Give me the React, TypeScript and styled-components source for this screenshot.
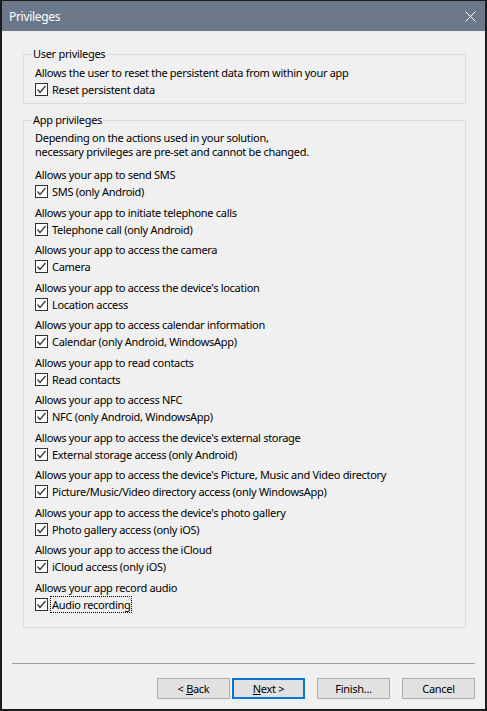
import React from "react";
import styled, { createGlobalStyle } from "styled-components";

const GlobalStyle = createGlobalStyle`
  html, body {
    margin: 0;
    padding: 0;
    background: #f0f0f0;
  }
  * {
    box-sizing: border-box;
  }
`;

const FONT = `"Noto Sans", "Open Sans", "Liberation Sans", sans-serif`;

const Window = styled.div`
  width: 487px;
  height: 711px;
  display: flex;
  flex-direction: column;
  background: #f0f0f0;
  border: 2px solid #1c1c1c;
  border-top-width: 1px;
  font-family: ${FONT};
  font-size: 11px;
  letter-spacing: -0.3px;
  color: #000;
  overflow: hidden;
`;

const TitleBar = styled.div`
  height: 30px;
  flex: none;
  display: flex;
  align-items: center;
  justify-content: space-between;
  background: #6b788a;
  color: #fff;
  padding: 0 9px 0 7px;
  font-size: 12px;
`;

const CloseButton = styled.span`
  display: flex;
  width: 11px;
  height: 11px;
`;

const Body = styled.div`
  flex: 1;
  display: flex;
  flex-direction: column;
  padding: 16px 19px 0 21px;
`;

const Group = styled.fieldset<{ $bottom: number }>`
  margin: 0 0 9px 0;
  border: 1px solid #dcdcdc;
  padding: 4px 10px ${(p) => p.$bottom}px 11px;
  min-width: 0;
`;

const Legend = styled.legend`
  padding: 0 1px;
  margin-left: -3px;
  line-height: 14px;
  font-size: 11px;
`;

const Text = styled.div`
  line-height: 16px;
  white-space: nowrap;
`;

const Intro = styled.div`
  line-height: 14px;
  margin: 0 0 8px;
`;

const ItemList = styled.div`
  display: flex;
  flex-direction: column;
  gap: 4.5px;
`;

const CheckRow = styled.label`
  display: flex;
  align-items: center;
  height: 17px;
  gap: 2px;
`;

const BoxIcon = styled.svg`
  flex: none;
  width: 13px;
  height: 13px;
`;

const Caption = styled.span<{ $focused?: boolean }>`
  padding: 0 1px;
  line-height: 15px;
  border: 1px dotted ${(p) => (p.$focused ? "#000" : "transparent")};
`;

const Footer = styled.div`
  flex: none;
  padding: 0 10px 10px 10px;
`;

const Separator = styled.div`
  height: 1px;
  background: #a0a0a0;
  margin-bottom: 14px;
`;

const Buttons = styled.div`
  display: flex;
  justify-content: flex-end;
`;

const Button = styled.button<{ $primary?: boolean; $gap: number }>`
  width: 73px;
  height: 21px;
  margin-left: ${(p) => p.$gap}px;
  background: #e1e1e1;
  border: ${(p) => (p.$primary ? "2px solid #0078d7" : "1px solid #adadad")};
  font-family: ${FONT};
  font-size: 11px;
  letter-spacing: -0.3px;
  color: #000;
  padding: 0;
  display: flex;
  align-items: center;
  justify-content: center;
`;

const Key = styled.span`
  text-decoration: underline;
`;

function Checkbox() {
  return (
    <BoxIcon viewBox="0 0 13 13">
      <rect x="0.5" y="0.5" width="12" height="12" fill="#fff" stroke="#333" />
      <polyline
        points="2.5,6.5 5,9.5 10.5,3"
        fill="none"
        stroke="#333"
        strokeWidth="1.2"
      />
    </BoxIcon>
  );
}

const privileges = [
  ["Allows your app to send SMS", "SMS (only Android)"],
  ["Allows your app to initiate telephone calls", "Telephone call (only Android)"],
  ["Allows your app to access the camera", "Camera"],
  ["Allows your app to access the device's location", "Location access"],
  ["Allows your app to access calendar information", "Calendar (only Android, WindowsApp)"],
  ["Allows your app to read contacts", "Read contacts"],
  ["Allows your app to access NFC", "NFC (only Android, WindowsApp)"],
  ["Allows your app to access the device's external storage", "External storage access (only Android)"],
  [
    "Allows your app to access the device's Picture, Music and Video directory",
    "Picture/Music/Video directory access (only WindowsApp)",
  ],
  ["Allows your app to access the device's photo gallery", "Photo gallery access (only iOS)"],
  ["Allows your app to access the iCloud", "iCloud access (only iOS)"],
  ["Allows your app record audio", "Audio recording"],
];

export default function App() {
  return (
    <>
      <GlobalStyle />
      <Window>
        <TitleBar>
          <span>Privileges</span>
          <CloseButton>
            <svg width="11" height="11" viewBox="0 0 11 11">
              <path d="M0.5 0.5 L10.5 10.5 M10.5 0.5 L0.5 10.5" stroke="#fff" strokeWidth="1" />
            </svg>
          </CloseButton>
        </TitleBar>
        <Body>
          <Group $bottom={5}>
            <Legend>User privileges</Legend>
            <Text>Allows the user to reset the persistent data from within your app</Text>
            <CheckRow>
              <Checkbox />
              <Caption>Reset persistent data</Caption>
            </CheckRow>
          </Group>
          <Group $bottom={14}>
            <Legend>App privileges</Legend>
            <Intro>
              Depending on the actions used in your solution,
              <br />
              necessary privileges are pre-set and cannot be changed.
            </Intro>
            <ItemList>
              {privileges.map(([desc, label], i) => (
                <div key={label}>
                  <Text>{desc}</Text>
                  <CheckRow>
                    <Checkbox />
                    <Caption $focused={i === privileges.length - 1}>{label}</Caption>
                  </CheckRow>
                </div>
              ))}
            </ItemList>
          </Group>
        </Body>
        <Footer>
          <Separator />
          <Buttons>
            <Button $gap={0}>
              &lt;&nbsp;<Key>B</Key>ack
            </Button>
            <Button $gap={2} $primary>
              <Key>N</Key>ext &gt;
            </Button>
            <Button $gap={12}>Finish...</Button>
            <Button $gap={12}>Cancel</Button>
          </Buttons>
        </Footer>
      </Window>
    </>
  );
}
